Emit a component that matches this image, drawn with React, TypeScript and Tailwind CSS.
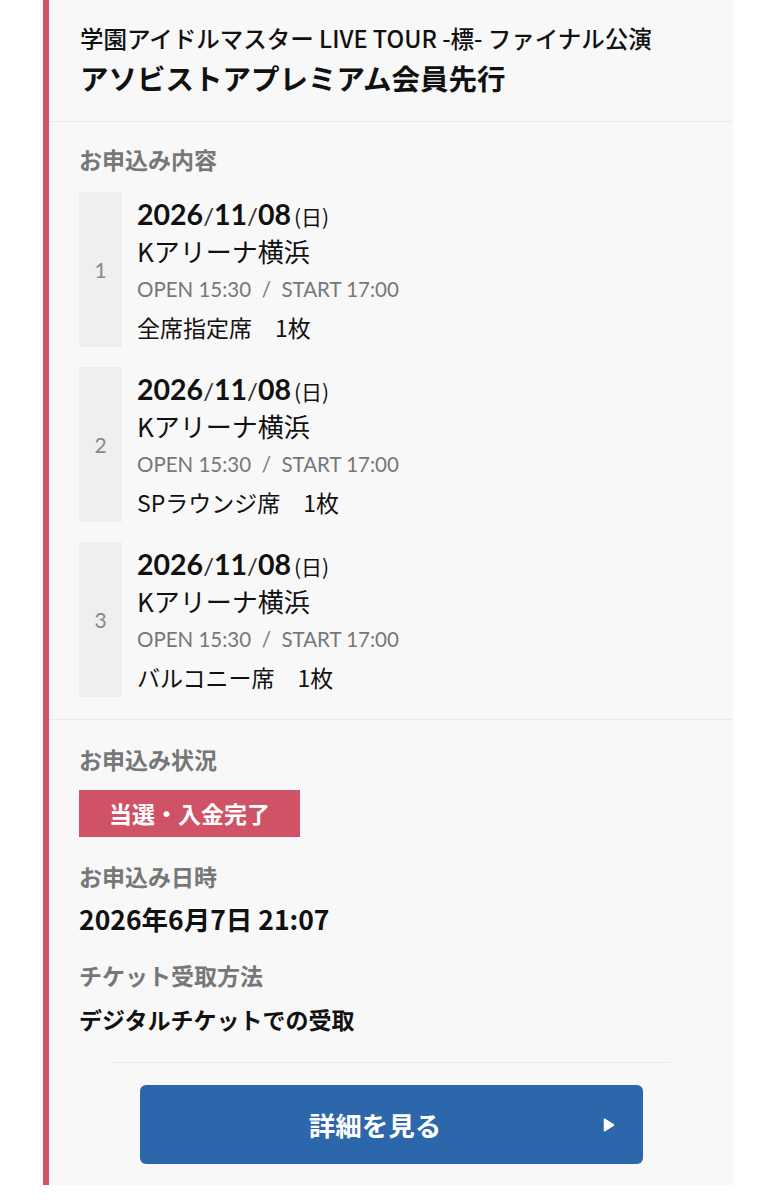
import React from "react";

const jp = "font-['Noto_Sans_CJK_JP',sans-serif]";
const lato = "font-['Lato','Noto_Sans_CJK_JP',sans-serif]";

type Entry = { no: number; seat: string };

const entries: Entry[] = [
  { no: 1, seat: "全席指定席" },
  { no: 2, seat: "SPラウンジ席" },
  { no: 3, seat: "バルコニー席" },
];

function EntryRow({ entry }: { entry: Entry }) {
  return (
    <div className="flex h-[155px]">
      <div className={`flex w-[43px] shrink-0 items-center justify-center bg-[#efefef] text-[21px] text-[#888] ${lato}`}>
        {entry.no}
      </div>
      <div className={`flex flex-col pl-[15px] pt-[1px] ${lato}`}>
        <div className="flex h-[38px] items-baseline text-[#111]">
          <span className="text-[28.5px] font-bold">2026</span>
          <span className="text-[24px] text-[#333]">/</span>
          <span className="text-[28.5px] font-bold">11</span>
          <span className="text-[24px] text-[#333]">/</span>
          <span className="text-[28.5px] font-bold">08</span>
          <span className={`ml-[3px] text-[21px] ${jp}`}>(日)</span>
        </div>
        <div className={`h-[39px] text-[26px] leading-[40px] text-[#111] ${jp}`}>Kアリーナ横浜</div>
        <div className="h-[38px] text-[20.5px] leading-[38px] text-[#777]">
          OPEN 15:30&nbsp;&nbsp;/&nbsp;&nbsp;START 17:00
        </div>
        <div className={`h-[38px] text-[23px] leading-[38px] text-[#111] ${jp}`}>
          {entry.seat}　1枚
        </div>
      </div>
    </div>
  );
}

export default function App() {
  return (
    <div className={`min-h-[1200px] bg-white ${jp}`}>
      <div className="ml-[43px] w-[690px] border-l-[6px] border-[#d05266] bg-[#f8f8f8]">
        {/* header */}
        <div className="border-b border-[#ebebeb] pb-[24px] pl-[31px] pt-[20px]">
          <div className="text-[23.5px] font-medium leading-[36px] text-[#111]">
            学園アイドルマスター LIVE TOUR -標- ファイナル公演
          </div>
          <div className="mt-[3px] text-[28.5px] font-bold leading-[38px] text-[#111]">
            アソビストアプレミアム会員先行
          </div>
        </div>

        {/* entries */}
        <div className="border-b border-[#ebebeb] pb-[22px] pl-[30px] pt-[21px]">
          <div className="text-[23px] font-bold leading-[32px] text-[#777]">お申込み内容</div>
          <div className="mt-[17px] flex flex-col gap-[20px]">
            {entries.map((e) => (
              <EntryRow key={e.no} entry={e} />
            ))}
          </div>
        </div>

        {/* status */}
        <div className="pb-[21px] pt-[23px]">
          <div className="pl-[30px]">
            <div className="text-[23px] font-bold leading-[32px] text-[#777]">お申込み状況</div>
            <div className="mt-[15px] flex h-[47px] w-[221px] items-center justify-center bg-[#d05266] text-[23px] font-bold text-white">
              当選・入金完了
            </div>
            <div className="mt-[23px] text-[23px] font-bold leading-[32px] text-[#777]">お申込み日時</div>
            <div className="mt-[9px] text-[26.5px] font-bold leading-[36px] text-[#111]">2026年6月7日 21:07</div>
            <div className="mt-[22px] text-[23px] font-bold leading-[32px] text-[#777]">チケット受取方法</div>
            <div className="mt-[11px] text-[23px] font-bold leading-[34px] text-[#111]">デジタルチケットでの受取</div>
          </div>
          <div className="mx-[62px] mt-[26px] border-t border-[#ebebeb]" />
          <div className="mt-[22px] flex justify-center">
            <button className="relative flex h-[79px] w-[503px] items-center justify-center rounded-[6px] bg-[#2c67ab] pr-[32px] text-[26.5px] font-bold text-white">
              詳細を見る
              <svg viewBox="0 0 12 14" className="absolute right-[28px] top-1/2 h-[14px] w-[12px] -translate-y-1/2">
                <path d="M1.5 1.2 L10.5 7 L1.5 12.8 Z" fill="white" stroke="white" strokeWidth="1.5" strokeLinejoin="round" />
              </svg>
            </button>
          </div>
        </div>
      </div>
    </div>
  );
}
